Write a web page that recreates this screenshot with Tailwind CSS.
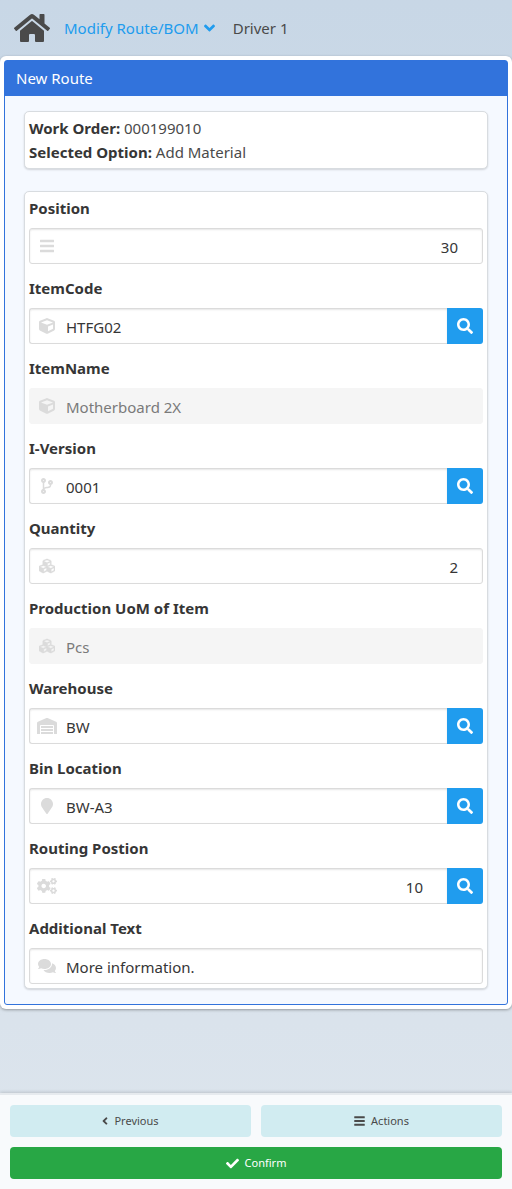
<!DOCTYPE html>
<html lang="en">
<head>
<meta charset="utf-8">
<meta name="viewport" content="width=device-width, initial-scale=1">
<title>New Route</title>
<script src="https://cdn.jsdelivr.net/npm/@tailwindcss/browser@4"></script>
</head>
<body class="flex min-h-screen flex-col bg-linear-to-b from-[#c8d7e6] to-[#dde5ed] font-['Segoe_UI','Noto_Sans',sans-serif] text-[15px] leading-6 text-[#4a4a4a]">

<svg class="hidden" aria-hidden="true">
  <symbol id="bars" viewBox="0 0 448 512"><path d="M12 54h424a12 12 0 0 1 12 12v60a12 12 0 0 1-12 12H12a12 12 0 0 1-12-12V66a12 12 0 0 1 12-12zm0 160h424a12 12 0 0 1 12 12v60a12 12 0 0 1-12 12H12a12 12 0 0 1-12-12v-60a12 12 0 0 1 12-12zm0 160h424a12 12 0 0 1 12 12v60a12 12 0 0 1-12 12H12a12 12 0 0 1-12-12v-60a12 12 0 0 1 12-12z"/></symbol>
  <symbol id="cube" viewBox="0 0 512 512"><path d="M239.1 6.3l-208 78c-18.7 7-31.1 25-31.1 45v225.1c0 18.2 10.3 34.8 26.5 42.9l208 104c13.5 6.8 29.4 6.8 42.9 0l208-104c16.3-8.1 26.5-24.8 26.5-42.9V129.3c0-20-12.4-37.9-31.1-44.9l-208-78C262 2.2 250 2.2 239.1 6.3zM256 68.4l192 72v1.1l-192 78-192-78v-1.1l192-72zm32 356V275.5l160-65v133.9l-160 80z"/></symbol>
  <symbol id="cubes" viewBox="0 0 512 512"><path stroke="currentColor" stroke-width="12" d="M488.6 250.2L392 214V105.5c0-15-9.3-28.4-23.4-33.7l-100-37.5c-8.1-3.1-17.1-3.1-25.3 0l-100 37.5c-14.1 5.3-23.4 18.7-23.4 33.7V214l-96.6 36.2C9.3 255.5 0 268.9 0 283.9V394c0 13.6 7.7 26.1 19.9 32.2l100 50c10.1 5.1 22.1 5.1 32.2 0l103.9-52 103.9 52c10.1 5.1 22.1 5.1 32.2 0l100-50c12.2-6.1 19.9-18.6 19.9-32.2V283.9c0-15-9.3-28.4-23.4-33.7zM358 214.8l-85 31.9v-68.2l85-37v73.3zM154 104.1l102-38.2 102 38.2v.6l-102 41.4-102-41.4v-.6zm84 291.1l-85 42.5v-79.1l85-38.8v75.4zm0-112l-102 41.4-102-41.4v-.6l102-38.2 102 38.2v.6zm240 112l-85 42.5v-79.1l85-38.8v75.4zm0-112l-102 41.4-102-41.4v-.6l102-38.2 102 38.2v.6z"/></symbol>
  <symbol id="branch" viewBox="0 0 384 512"><path d="M384 144c0-44.2-35.8-80-80-80s-80 35.8-80 80c0 36.4 24.3 67.1 57.5 76.8-.6 16.1-4.2 28.5-11 36.9-15.4 19.2-49.3 22.4-85.2 25.7-28.2 2.6-57.4 5.4-81.3 16.9v-144c32.5-10.2 56-40.5 56-76.3 0-44.2-35.8-80-80-80S0 35.8 0 80c0 35.8 23.5 66.1 56 76.3v199.3C23.5 365.9 0 396.2 0 432c0 44.2 35.8 80 80 80s80-35.8 80-80c0-34-21.2-63.1-51.2-74.6 3.1-5.2 7.8-9.8 14.9-13.4 16.2-8.2 40.4-10.4 66.1-12.8 42.2-3.9 90-8.4 118.2-43.4 14-17.4 21.1-39.8 21.6-67.9 31.6-10.8 54.4-40.7 54.4-75.9zM80 64c8.8 0 16 7.2 16 16s-7.2 16-16 16-16-7.2-16-16 7.2-16 16-16zm0 384c-8.8 0-16-7.2-16-16s7.2-16 16-16 16 7.2 16 16-7.2 16-16 16zm224-320c8.8 0 16 7.2 16 16s-7.2 16-16 16-16-7.2-16-16 7.2-16 16-16z"/></symbol>
  <symbol id="warehouse" viewBox="0 0 640 512"><path d="M504 352H136.4c-4.4 0-8 3.6-8 8l-.1 48c0 4.4 3.6 8 8 8H504c4.4 0 8-3.6 8-8v-48c0-4.4-3.6-8-8-8zm0 96H136.1c-4.4 0-8 3.6-8 8l-.1 48c0 4.4 3.6 8 8 8h368c4.4 0 8-3.6 8-8v-48c0-4.4-3.6-8-8-8zm0-192H136.6c-4.4 0-8 3.6-8 8l-.1 48c0 4.4 3.6 8 8 8H504c4.4 0 8-3.6 8-8v-48c0-4.4-3.6-8-8-8zm106.5-139L338.4 3.7a48.15 48.15 0 0 0-36.9 0L29.5 117C11.7 124.5 0 141.9 0 161.3V504c0 4.4 3.6 8 8 8h80c4.4 0 8-3.6 8-8V256c0-17.6 14.6-32 32.6-32h382.8c18 0 32.6 14.4 32.6 32v248c0 4.4 3.6 8 8 8h80c4.4 0 8-3.6 8-8V161.3c0-19.4-11.7-36.8-29.5-44.3z"/></symbol>
  <symbol id="marker" viewBox="0 0 384 512"><path d="M172.268 501.67C26.97 291.031 0 269.413 0 192 0 85.961 85.961 0 192 0s192 85.961 192 192c0 77.413-26.97 99.031-172.268 309.67-9.535 13.774-29.93 13.773-39.464 0z"/></symbol>
  <symbol id="cogs" viewBox="0 0 640 512"><path d="M512.1 191l-8.2 14.3c-3 5.3-9.4 7.5-15.1 5.4-11.8-4.4-22.6-10.7-32.1-18.6-4.6-3.8-5.8-10.5-2.8-15.7l8.2-14.3c-6.9-8-12.3-17.3-15.9-27.4h-16.5c-6 0-11.2-4.3-12.2-10.3-2-12-2.1-24.6 0-37.1 1-6 6.2-10.4 12.2-10.4h16.5c3.6-10.1 9-19.4 15.9-27.4l-8.2-14.3c-3-5.2-1.9-11.9 2.8-15.7 9.5-7.9 20.4-14.2 32.1-18.6 5.7-2.1 12.1.1 15.1 5.4l8.2 14.3c10.5-1.9 21.2-1.9 31.7 0L552 6.3c3-5.3 9.4-7.5 15.1-5.4 11.8 4.4 22.6 10.7 32.1 18.6 4.6 3.8 5.8 10.5 2.8 15.7l-8.2 14.3c6.9 8 12.3 17.3 15.9 27.4h16.5c6 0 11.2 4.3 12.2 10.3 2 12 2.1 24.6 0 37.1-1 6-6.2 10.4-12.2 10.4h-16.5c-3.6 10.1-9 19.4-15.9 27.4l8.2 14.3c3 5.2 1.9 11.9-2.8 15.7-9.5 7.9-20.4 14.2-32.1 18.6-5.7 2.1-12.1-.1-15.1-5.4l-8.2-14.3c-10.4 1.9-21.2 1.9-31.7 0zm-10.5-58.8c38.5 29.6 82.4-14.3 52.8-52.8-38.5-29.7-82.4 14.3-52.8 52.8zM386.3 286.1l33.7 16.8c10.1 5.8 14.5 18.1 10.5 29.1-8.9 24.2-26.4 46.4-42.6 65.8-7.4 8.9-20.2 11.1-30.3 5.3l-29.1-16.8c-16 13.7-34.6 24.6-54.9 31.7v33.6c0 11.6-8.3 21.6-19.7 23.6-24.6 4.2-50.4 4.4-75.9 0-11.5-2-20-11.9-20-23.6V418c-20.3-7.2-38.9-18-54.9-31.7L74 403c-10 5.8-22.9 3.6-30.3-5.3-16.2-19.4-33.3-41.6-42.2-65.7-4-10.9.4-23.2 10.5-29.1l33.3-16.8c-3.9-20.9-3.9-42.4 0-63.4L12 205.8c-10.1-5.8-14.6-18.1-10.5-29 8.9-24.2 26-46.4 42.2-65.8 7.4-8.9 20.2-11.1 30.3-5.3l29.1 16.8c16-13.7 34.6-24.6 54.9-31.7V57.1c0-11.5 8.2-21.5 19.6-23.5 24.6-4.2 50.5-4.4 76-.1 11.5 2 20 11.9 20 23.6v33.6c20.3 7.2 38.9 18 54.9 31.7l29.1-16.8c10-5.8 22.9-3.6 30.3 5.3 16.2 19.4 33.2 41.6 42.1 65.8 4 10.9.1 23.2-10 29.1l-33.7 16.8c3.9 21 3.9 42.5 0 63.5zm-117.6 21.1c59.2-77-28.7-164.9-105.7-105.7-59.2 77 28.7 164.9 105.7 105.7zm243.4 182.7l-8.2 14.3c-3 5.3-9.4 7.5-15.1 5.4-11.8-4.4-22.6-10.7-32.1-18.6-4.6-3.8-5.8-10.5-2.8-15.7l8.2-14.3c-6.9-8-12.3-17.3-15.9-27.4h-16.5c-6 0-11.2-4.3-12.2-10.3-2-12-2.1-24.6 0-37.1 1-6 6.2-10.4 12.2-10.4h16.5c3.6-10.1 9-19.4 15.9-27.4l-8.2-14.3c-3-5.2-1.9-11.9 2.8-15.7 9.5-7.9 20.4-14.2 32.1-18.6 5.7-2.1 12.1.1 15.1 5.4l8.2 14.3c10.5-1.9 21.2-1.9 31.7 0l8.2-14.3c3-5.3 9.4-7.5 15.1-5.4 11.8 4.4 22.6 10.7 32.1 18.6 4.6 3.8 5.8 10.5 2.8 15.7l-8.2 14.3c6.9 8 12.3 17.3 15.9 27.4h16.5c6 0 11.2 4.3 12.2 10.3 2 12 2.1 24.6 0 37.1-1 6-6.2 10.4-12.2 10.4h-16.5c-3.6 10.1-9 19.4-15.9 27.4l8.2 14.3c3 5.2 1.9 11.9-2.8 15.7-9.5 7.9-20.4 14.2-32.1 18.6-5.7 2.1-12.1-.1-15.1-5.4l-8.2-14.3c-10.4 1.9-21.2 1.9-31.7 0zM501.6 431c38.5 29.6 82.4-14.3 52.8-52.8-38.5-29.6-82.4 14.3-52.8 52.8z"/></symbol>
  <symbol id="comments" viewBox="0 0 576 512"><path d="M416 192c0-88.4-93.1-160-208-160S0 103.6 0 192c0 34.3 14.1 65.9 38 92-13.4 30.2-35.5 54.2-35.8 54.5-2.2 2.3-2.8 5.7-1.5 8.7S4.8 352 8 352c36.6 0 66.9-12.3 88.7-25 32.2 15.7 70.3 25 111.3 25 114.9 0 208-71.6 208-160zm122 220c23.9-26 38-57.7 38-92 0-66.9-53.5-124.2-129.3-148.1.9 6.6 1.3 13.3 1.3 20.1 0 105.9-107.7 192-240 192-10.8 0-21.3-.8-31.7-1.9C207.8 439.6 281.8 480 368 480c41 0 79.1-9.2 111.3-25 21.8 12.7 52.1 25 88.7 25 3.2 0 6.1-1.9 7.3-4.8 1.3-2.9.7-6.3-1.5-8.7-.3-.3-22.4-24.2-35.8-54.5z"/></symbol>
  <symbol id="search" viewBox="0 0 512 512"><path d="M505 442.7L405.3 343c-4.5-4.5-10.6-7-17-7H372c27.6-35.3 44-79.7 44-128C416 93.1 322.9 0 208 0S0 93.1 0 208s93.1 208 208 208c48.3 0 92.7-16.4 128-44v16.3c0 6.4 2.5 12.5 7 17l99.7 99.7c9.4 9.4 24.6 9.4 33.9 0l28.3-28.3c9.4-9.4 9.4-24.6.1-34zM208 336c-70.7 0-128-57.2-128-128 0-70.7 57.2-128 128-128 70.7 0 128 57.2 128 128 0 70.7-57.2 128-128 128z"/></symbol>
</svg>

<header class="flex h-14 items-center pl-[14px]">
  <a href="#" aria-label="Home">
    <svg class="h-8 w-9" viewBox="0 0 576 512" fill="currentColor"><path d="M280.37 148.26L96 300.11V464a16 16 0 0 0 16 16l112.06-.29a16 16 0 0 0 15.92-16V368a16 16 0 0 1 16-16h64a16 16 0 0 1 16 16v95.64a16 16 0 0 0 16 16.05L464 480a16 16 0 0 0 16-16V300L295.67 148.26a12.19 12.19 0 0 0-15.3 0zM571.6 251.47L488 182.56V44.05a12 12 0 0 0-12-12h-56a12 12 0 0 0-12 12v72.61L318.47 43a48 48 0 0 0-61 0L4.34 251.47a12 12 0 0 0-1.6 16.9l25.5 31A12 12 0 0 0 45.15 301l235.22-193.74a12.19 12.19 0 0 1 15.3 0L530.9 301a12 12 0 0 0 16.9-1.6l25.5-31a12 12 0 0 0-1.7-16.93z"/></svg>
  </a>
  <button type="button" class="ml-[14px] flex items-center gap-[5px] text-[#209cee]">Modify Route/BOM
    <svg class="h-[18px] w-[11px]" viewBox="0 0 320 512" fill="currentColor"><path d="M143 352.3L7 216.3c-9.4-9.4-9.4-24.6 0-33.9l22.6-22.6c9.4-9.4 24.6-9.4 33.9 0l96.4 96.4 96.4-96.4c9.4-9.4 24.6-9.4 33.9 0l22.6 22.6c9.4 9.4 9.4 24.6 0 33.9l-136 136c-9.2 9.4-24.4 9.4-33.8 0z"/></svg>
  </button>
  <span class="ml-[18px]">Driver 1</span>
</header>

<main class="rounded-md bg-white p-1 shadow-[0_1px_3px_rgba(10,10,10,0.35)]">
  <section class="rounded-[3px] border border-[#3273dc] bg-[#f5f9ff]">
    <h1 class="bg-[#3273dc] px-[11px] pt-[5px] pb-[6px] text-white">New Route</h1>
    <div class="px-[19px] pt-[15px] pb-[15px]">
      <div class="rounded-[5px] border border-[#d8dce0] bg-white p-1 shadow-[0_1px_2px_rgba(10,10,10,0.15)]">
        <p><strong class="text-[#363636]">Work Order:</strong> 000199010</p>
        <p><strong class="text-[#363636]">Selected Option:</strong> Add Material</p>
      </div>

      <form class="mt-[22px] flex flex-col gap-3 rounded-[5px] border border-[#d8dce0] bg-white p-1 shadow-[0_1px_2px_rgba(10,10,10,0.15)]">
        <div>
          <label for="position" class="mb-2 block font-bold text-[#363636]">Position</label>
          <div class="relative flex">
            <input id="position" value="30" class="h-9 min-w-0 flex-1 rounded-[3px] border border-[#dbdbdb] bg-white pr-6 pl-9 pt-[2px] text-right text-[#363636] shadow-[inset_0_1px_2px_rgba(10,10,10,0.1)]">
            <span class="pointer-events-none absolute inset-y-0 left-0 flex w-9 items-center justify-center text-[#dbdbdb]"><svg class="h-4 w-[14px]" fill="currentColor"><use href="#bars"/></svg></span>
          </div>
        </div>
        <div>
          <label for="itemcode" class="mb-2 block font-bold text-[#363636]">ItemCode</label>
          <div class="relative flex">
            <input id="itemcode" value="HTFG02" class="h-9 min-w-0 flex-1 rounded-l-[3px] border border-r-0 border-[#dbdbdb] bg-white pr-6 pl-9 pt-[2px] text-[#363636] shadow-[inset_0_1px_2px_rgba(10,10,10,0.1)]">
            <button type="button" aria-label="Search item code" class="flex size-9 items-center justify-center rounded-r-[3px] bg-[#209cee] text-white"><svg class="size-4" fill="currentColor"><use href="#search"/></svg></button>
            <span class="pointer-events-none absolute inset-y-0 left-0 flex w-9 items-center justify-center text-[#dbdbdb]"><svg class="size-4" fill="currentColor"><use href="#cube"/></svg></span>
          </div>
        </div>
        <div>
          <label for="itemname" class="mb-2 block font-bold text-[#363636]">ItemName</label>
          <div class="relative flex">
            <input id="itemname" value="Motherboard 2X" disabled class="h-9 min-w-0 flex-1 rounded-[3px] border border-[#f5f5f5] bg-[#f5f5f5] pr-6 pl-9 pt-[2px] text-[#7a7a7a]">
            <span class="pointer-events-none absolute inset-y-0 left-0 flex w-9 items-center justify-center text-[#dbdbdb]"><svg class="size-4" fill="currentColor"><use href="#cube"/></svg></span>
          </div>
        </div>
        <div>
          <label for="iversion" class="mb-2 block font-bold text-[#363636]">I-Version</label>
          <div class="relative flex">
            <input id="iversion" value="0001" class="h-9 min-w-0 flex-1 rounded-l-[3px] border border-r-0 border-[#dbdbdb] bg-white pr-6 pl-9 pt-[2px] text-[#363636] shadow-[inset_0_1px_2px_rgba(10,10,10,0.1)]">
            <button type="button" aria-label="Search version" class="flex size-9 items-center justify-center rounded-r-[3px] bg-[#209cee] text-white"><svg class="size-4" fill="currentColor"><use href="#search"/></svg></button>
            <span class="pointer-events-none absolute inset-y-0 left-0 flex w-9 items-center justify-center text-[#dbdbdb]"><svg class="h-4 w-3" fill="currentColor"><use href="#branch"/></svg></span>
          </div>
        </div>
        <div>
          <label for="quantity" class="mb-2 block font-bold text-[#363636]">Quantity</label>
          <div class="relative flex">
            <input id="quantity" value="2" class="h-9 min-w-0 flex-1 rounded-[3px] border border-[#dbdbdb] bg-white pr-6 pl-9 pt-[2px] text-right text-[#363636] shadow-[inset_0_1px_2px_rgba(10,10,10,0.1)]">
            <span class="pointer-events-none absolute inset-y-0 left-0 flex w-9 items-center justify-center text-[#dbdbdb]"><svg class="size-4" fill="currentColor"><use href="#cubes"/></svg></span>
          </div>
        </div>
        <div>
          <label for="uom" class="mb-2 block font-bold text-[#363636]">Production UoM of Item</label>
          <div class="relative flex">
            <input id="uom" value="Pcs" disabled class="h-9 min-w-0 flex-1 rounded-[3px] border border-[#f5f5f5] bg-[#f5f5f5] pr-6 pl-9 pt-[2px] text-[#7a7a7a]">
            <span class="pointer-events-none absolute inset-y-0 left-0 flex w-9 items-center justify-center text-[#dbdbdb]"><svg class="size-4" fill="currentColor"><use href="#cubes"/></svg></span>
          </div>
        </div>
        <div>
          <label for="whs" class="mb-2 block font-bold text-[#363636]">Warehouse</label>
          <div class="relative flex">
            <input id="whs" value="BW" class="h-9 min-w-0 flex-1 rounded-l-[3px] border border-r-0 border-[#dbdbdb] bg-white pr-6 pl-9 pt-[2px] text-[#363636] shadow-[inset_0_1px_2px_rgba(10,10,10,0.1)]">
            <button type="button" aria-label="Search warehouse" class="flex size-9 items-center justify-center rounded-r-[3px] bg-[#209cee] text-white"><svg class="size-4" fill="currentColor"><use href="#search"/></svg></button>
            <span class="pointer-events-none absolute inset-y-0 left-0 flex w-9 items-center justify-center text-[#dbdbdb]"><svg class="h-4 w-5" fill="currentColor"><use href="#warehouse"/></svg></span>
          </div>
        </div>
        <div>
          <label for="bin" class="mb-2 block font-bold text-[#363636]">Bin Location</label>
          <div class="relative flex">
            <input id="bin" value="BW-A3" class="h-9 min-w-0 flex-1 rounded-l-[3px] border border-r-0 border-[#dbdbdb] bg-white pr-6 pl-9 pt-[2px] text-[#363636] shadow-[inset_0_1px_2px_rgba(10,10,10,0.1)]">
            <button type="button" aria-label="Search bin location" class="flex size-9 items-center justify-center rounded-r-[3px] bg-[#209cee] text-white"><svg class="size-4" fill="currentColor"><use href="#search"/></svg></button>
            <span class="pointer-events-none absolute inset-y-0 left-0 flex w-9 items-center justify-center text-[#dbdbdb]"><svg class="h-4 w-3" fill="currentColor"><use href="#marker"/></svg></span>
          </div>
        </div>
        <div>
          <label for="routing" class="mb-2 block font-bold text-[#363636]">Routing Postion</label>
          <div class="relative flex">
            <input id="routing" value="10" class="h-9 min-w-0 flex-1 rounded-l-[3px] border border-r-0 border-[#dbdbdb] bg-white pr-6 pl-9 pt-[2px] text-right text-[#363636] shadow-[inset_0_1px_2px_rgba(10,10,10,0.1)]">
            <button type="button" aria-label="Search routing position" class="flex size-9 items-center justify-center rounded-r-[3px] bg-[#209cee] text-white"><svg class="size-4" fill="currentColor"><use href="#search"/></svg></button>
            <span class="pointer-events-none absolute inset-y-0 left-0 flex w-9 items-center justify-center text-[#dbdbdb]"><svg class="h-4 w-5" fill="currentColor"><use href="#cogs"/></svg></span>
          </div>
        </div>
        <div>
          <label for="additional" class="mb-2 block font-bold text-[#363636]">Additional Text</label>
          <div class="relative flex">
            <input id="additional" value="More information." class="h-9 min-w-0 flex-1 rounded-[3px] border border-[#dbdbdb] bg-white pr-6 pl-9 pt-[2px] text-[#363636] shadow-[inset_0_1px_2px_rgba(10,10,10,0.1)]">
            <span class="pointer-events-none absolute inset-y-0 left-0 flex w-9 items-center justify-center text-[#dbdbdb]"><svg class="h-4 w-[18px]" fill="currentColor"><use href="#comments"/></svg></span>
          </div>
        </div>
      </form>
    </div>
  </section>
</main>

<footer class="mt-auto grid grid-cols-2 gap-[10px] border-t-2 border-[#e6eaee] bg-[#f8fafc] p-[10px] text-[11px] shadow-[0_-1px_3px_rgba(10,10,10,0.15)]">
  <button type="button" class="flex h-8 items-center justify-center gap-[6px] rounded bg-[#d1ecf1]">
    <svg class="h-3 w-[6px]" viewBox="0 0 256 512" fill="currentColor"><path d="M31.7 239l136-136c9.4-9.4 24.6-9.4 33.9 0l22.6 22.6c9.4 9.4 9.4 24.6 0 33.9L127.9 256l96.4 96.4c9.4 9.4 9.4 24.6 0 33.9L201.7 409c-9.4 9.4-24.6 9.4-33.9 0l-136-136c-9.5-9.4-9.5-24.6-.1-34z"/></svg>
    Previous
  </button>
  <button type="button" class="flex h-8 items-center justify-center gap-[6px] rounded bg-[#d1ecf1]">
    <svg class="h-3 w-[11px]" fill="currentColor"><use href="#bars"/></svg>
    Actions
  </button>
  <button type="button" class="col-span-2 flex h-8 items-center justify-center gap-[6px] rounded bg-[#28a745] text-white">
    <svg class="size-[13px]" viewBox="0 0 512 512" fill="currentColor"><path d="M173.898 439.404l-166.4-166.4c-9.997-9.997-9.997-26.206 0-36.204l36.203-36.204c9.997-9.998 26.207-9.998 36.204 0L192 312.69 432.095 72.596c9.997-9.997 26.207-9.997 36.204 0l36.203 36.204c9.997 9.997 9.997 26.206 0 36.204l-294.4 294.401c-9.998 9.997-26.207 9.997-36.204-.001z"/></svg>
    Confirm
  </button>
</footer>
</body>
</html>
